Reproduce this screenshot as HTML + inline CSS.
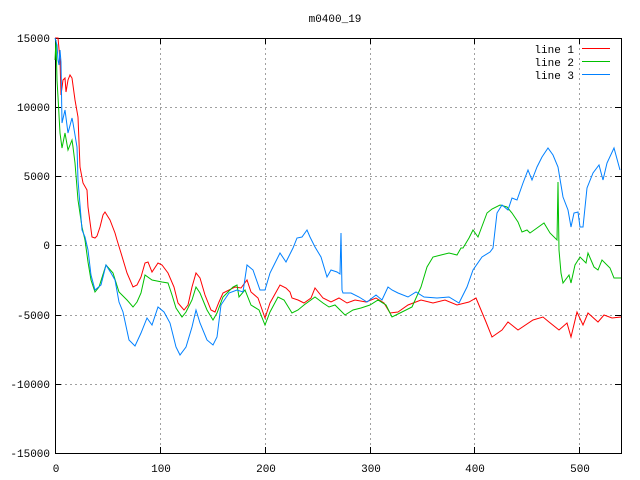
<!DOCTYPE html>
<html><head><meta charset="utf-8"><style>
html,body{margin:0;padding:0;background:#fff;}
svg{display:block;}
text{font-family:"Liberation Mono","DejaVu Sans Mono",monospace;font-size:11px;fill:#000;}
</style></head><body>
<svg width="640" height="480" viewBox="0 0 640 480" xmlns="http://www.w3.org/2000/svg">
<rect width="640" height="480" fill="#fff"/>
<g stroke="#a0a0a0" stroke-width="1" stroke-dasharray="2,3" fill="none">
<path d="M160.5 38V453M265.5 38V453M370.5 38V453M474.5 38V453M579.5 38V453"/>
<path d="M55 107.5H621M55 176.5H621M55 245.5H621M55 315.5H621M55 384.5H621"/>
</g>
<g stroke="#000" stroke-width="1" fill="none">
<rect x="55.5" y="38.5" width="566" height="415"/>
<path d="M55 107.5h6M55 176.5h6M55 245.5h6M55 315.5h6M55 384.5h6M621 107.5h-6M621 176.5h-6M621 245.5h-6M621 315.5h-6M621 384.5h-6"/>
<path d="M160.5 453v-6M265.5 453v-6M370.5 453v-6M474.5 453v-6M579.5 453v-6M160.5 38v6M265.5 38v6M370.5 38v6M474.5 38v6M579.5 38v6"/>
</g>
<g text-anchor="end">
<text x="50" y="42">15000</text><text x="50" y="111">10000</text><text x="50" y="180">5000</text>
<text x="50" y="249">0</text><text x="50" y="319">-5000</text><text x="50" y="388">-10000</text><text x="50" y="457">-15000</text>
</g>
<g text-anchor="middle">
<text x="56" y="472">0</text><text x="161" y="472">100</text><text x="266" y="472">200</text><text x="371" y="472">300</text><text x="475" y="472">400</text><text x="580" y="472">500</text>
<text x="335" y="22">m0400_19</text>
</g>
<g text-anchor="end">
<text x="574" y="53">line 1</text><text x="574" y="66">line 2</text><text x="574" y="79">line 3</text>
</g>
<path d="M582 48.5h28" stroke="#ff0000"/><path d="M582 61.5h28" stroke="#00c000"/><path d="M582 74.5h28" stroke="#0080ff"/>
<g fill="none" stroke-width="1">
<polyline stroke="#ff0000" points="55,38 58,38 60,60 61,95 63,80 65,78 66,92 68,80 70,75 72,78 75,100 78,117 80,167 83,183 87,190 88,207 92,237 95,238 97,236 100,227 103,215 105,212 110,220 115,233 117,240 121,253 127,273 133,287 137,285 141,277 145,263 148,262 152,272 158,263 162,265 168,273 174,287 178,303 184,310 188,305 192,287 196,273 200,278 205,295 211,310 215,312 219,302 223,293 235,287 241,288 247,280 251,292 258,298 265,318 270,303 280,285 286,288 290,292 292,298 298,300 304,303 311,298 315,288 323,298 331,302 339,298 347,303 355,300 366,302 376,298 384,303 390,313 398,312 408,305 421,300 433,303 445,300 457,305 469,302 476,298 486,322 492,337 502,330 508,322 518,330 533,320 543,317 549,322 559,330 567,323 571,337 577,312 583,325 588,313 598,322 604,315 612,318 621,317"/>
<polyline stroke="#00c000" points="55,60 56,40 57,80 58,97 60,133 62,148 65,133 68,150 72,140 73,147 75,163 78,200 82,227 85,240 88,262 91,280 95,292 99,287 106,265 113,273 119,292 127,300 133,307 137,302 141,293 145,275 152,280 162,282 168,283 172,295 176,308 182,317 186,312 192,300 196,287 200,293 207,310 213,320 217,313 223,297 233,287 237,285 239,297 245,290 251,305 259,310 265,325 270,312 278,297 284,300 292,313 298,310 304,305 315,297 323,303 329,307 335,305 345,315 353,310 361,308 370,305 378,300 386,305 392,317 400,313 412,307 421,287 427,267 433,257 441,255 449,253 457,255 461,248 463,248 469,238 473,230 478,237 487,213 492,209 500,205 507,207 512,213 518,222 522,232 527,230 530,233 537,228 544,223 550,233 557,240 558,182 559,250 561,273 563,283 569,275 571,283 575,265 580,257 586,263 588,253 594,267 598,270 602,260 610,268 614,278 621,278"/>
<polyline stroke="#0080ff" points="55,38 57,45 58,60 59,65 60,50 61,62 62,123 65,110 68,133 72,118 73,123 77,147 78,180 82,230 85,237 88,250 91,275 95,290 101,285 106,265 111,273 115,280 119,302 123,312 129,340 135,346 141,333 147,318 152,325 158,307 164,312 170,323 176,347 180,355 186,347 192,327 196,310 200,323 207,340 213,345 217,337 221,305 229,293 237,290 243,292 247,265 253,270 260,290 265,290 270,273 280,253 286,262 293,248 297,238 302,237 307,230 310,237 315,247 321,257 327,277 331,270 337,272 340,274 341,233 342,290 343,293 351,293 359,297 367,302 376,295 382,300 388,287 392,290 398,293 408,297 416,292 424,297 437,298 449,297 459,303 467,287 473,270 482,257 490,252 493,248 497,213 502,205 508,210 512,198 517,200 523,183 528,170 532,180 537,167 542,157 548,148 553,155 558,167 563,197 568,210 571,227 574,213 578,212 580,227 583,227 587,188 593,173 599,165 603,180 607,163 614,148 620,170"/>
</g>
</svg>
</body></html>
